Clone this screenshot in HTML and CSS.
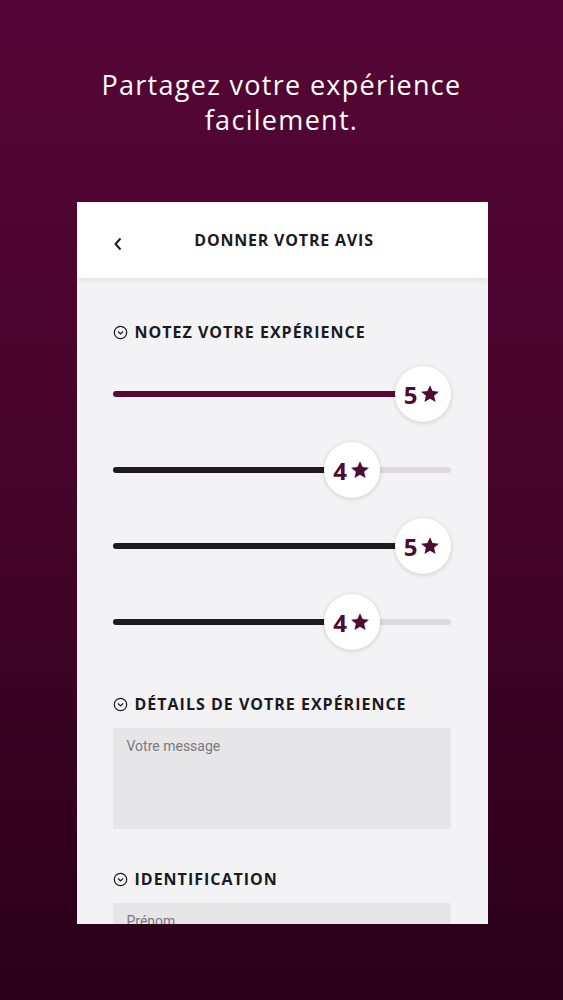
FILE: index.html
```html
<!DOCTYPE html>
<html>
<head>
  <title>Donner votre avis</title>
  <link rel="stylesheet" href="styles.css">
</head>
<body>

  <div class="screen">
    <h1 class="tagline">Partagez votre expérience<br>facilement.</h1>

    <div class="phone">
      <div class="topbar">
        <span class="back">
          <svg width="10" height="14" viewBox="0 0 10 14"><path d="M7.5 1.5 L2.5 7 L7.5 12.5" fill="none" stroke="#1b1a1d" stroke-width="2"/></svg>
        </span>
        <span class="topbar-title">DONNER VOTRE AVIS</span>
      </div>

      <div class="content">
        <!-- Notes -->
        <h2 class="section-title">
          <svg class="chev" width="15" height="15" viewBox="0 0 16 16"><circle cx="8" cy="8" r="6.6" fill="none" stroke="#1b1a1d" stroke-width="1.3"/><path d="M5.3 6.9 L8 9.5 L10.7 6.9" fill="none" stroke="#1b1a1d" stroke-width="1.3"/></svg>
          NOTEZ VOTRE EXPÉRIENCE
        </h2>

        <div class="ratings">
          <div class="slider active" style="--pos: 1">
            <div class="fill"></div>
            <div class="thumb">5<svg class="star" viewBox="0 0 24 24"><path d="M12 1.5l3.1 7 7.6.7-5.8 5 1.8 7.5L12 17.8l-6.7 3.9 1.8-7.5-5.8-5 7.6-.7z"/></svg></div>
          </div>
          <div class="slider" style="--pos: 0.75">
            <div class="fill"></div>
            <div class="thumb">4<svg class="star" viewBox="0 0 24 24"><path d="M12 1.5l3.1 7 7.6.7-5.8 5 1.8 7.5L12 17.8l-6.7 3.9 1.8-7.5-5.8-5 7.6-.7z"/></svg></div>
          </div>
          <div class="slider" style="--pos: 1">
            <div class="fill"></div>
            <div class="thumb">5<svg class="star" viewBox="0 0 24 24"><path d="M12 1.5l3.1 7 7.6.7-5.8 5 1.8 7.5L12 17.8l-6.7 3.9 1.8-7.5-5.8-5 7.6-.7z"/></svg></div>
          </div>
          <div class="slider" style="--pos: 0.75">
            <div class="fill"></div>
            <div class="thumb">4<svg class="star" viewBox="0 0 24 24"><path d="M12 1.5l3.1 7 7.6.7-5.8 5 1.8 7.5L12 17.8l-6.7 3.9 1.8-7.5-5.8-5 7.6-.7z"/></svg></div>
          </div>
        </div>

        <!-- Message -->
        <h2 class="section-title">
          <svg class="chev" width="15" height="15" viewBox="0 0 16 16"><circle cx="8" cy="8" r="6.6" fill="none" stroke="#1b1a1d" stroke-width="1.3"/><path d="M5.3 6.9 L8 9.5 L10.7 6.9" fill="none" stroke="#1b1a1d" stroke-width="1.3"/></svg>
          DÉTAILS DE VOTRE EXPÉRIENCE
        </h2>
        <textarea class="field message" placeholder="Votre message"></textarea>

        <!-- Identification -->
        <h2 class="section-title">
          <svg class="chev" width="15" height="15" viewBox="0 0 16 16"><circle cx="8" cy="8" r="6.6" fill="none" stroke="#1b1a1d" stroke-width="1.3"/><path d="M5.3 6.9 L8 9.5 L10.7 6.9" fill="none" stroke="#1b1a1d" stroke-width="1.3"/></svg>
          IDENTIFICATION
        </h2>
        <input class="field" type="text" placeholder="Prénom">
      </div>
    </div>
  </div>

</body>
</html>
```

FILE: styles.css
```css
* {
  box-sizing: border-box;
}

body, html {
  height: 100%;
  margin: 0;
}

body {
  font-family: "Open Sans", sans-serif;
  background: linear-gradient(180deg, #560636 0%, #420327 55%, #2a0119 100%);
  overflow: hidden;
}

.screen {
  display: flex;
  flex-direction: column;
  align-items: center;
  padding-top: 67px;
}

.tagline {
  margin: 0;
  color: #fff;
  font-size: 27px;
  font-weight: 500;
  line-height: 35px;
  text-align: center;
  letter-spacing: 1.3px;
}

.phone {
  margin-top: 65px;
  width: 411px;
  height: 722px;
  margin-left: 1px;
  background-color: #f3f2f5;
  overflow: hidden;
}

.topbar {
  height: 76px;
  background-color: #fff;
  display: flex;
  align-items: center;
  justify-content: center;
  position: relative;
  box-shadow: 0 2px 6px rgba(0,0,0,0.08);
}

.back {
  position: absolute;
  left: 36px;
  top: 32px;
}

.topbar-title {
  font-size: 16px;
  font-weight: 700;
  color: #1b1a1d;
  letter-spacing: 0.8px;
  margin-left: 4px;
}

.content {
  padding: 44px 37px 0 36px;
}

.section-title {
  display: flex;
  align-items: center;
  gap: 7px;
  margin: 0;
  font-size: 16px;
  font-weight: 700;
  color: #1b1a1d;
  letter-spacing: 1px;
  height: 20px;
}

.ratings {
  padding: 14px 0 34px;
}

.slider {
  position: relative;
  height: 76px;
  display: flex;
  align-items: center;
}

.slider::before {
  content: "";
  position: absolute;
  left: 0;
  right: 0;
  height: 6px;
  border-radius: 3px;
  background-color: #dcdadd;
}

.fill {
  position: relative;
  height: 6px;
  border-radius: 3px;
  background-color: #1e1b20;
  width: calc((100% - 56px) * var(--pos) + 28px);
}

.slider.active .fill {
  background-color: #580a36;
}

.thumb {
  position: absolute;
  left: calc((100% - 56px) * var(--pos));
  top: 10px;
  width: 56px;
  height: 56px;
  border-radius: 50%;
  background-color: #fff;
  box-shadow: 0 1px 5px rgba(0,0,0,0.16);
  display: flex;
  align-items: center;
  justify-content: center;
  gap: 3px;
  color: #4f0a30;
  font-size: 24px;
  font-weight: 700;
  padding-right: 1px;
}

.star {
  width: 20px;
  height: 20px;
  fill: #4f0a30;
}

.field {
  display: block;
  width: 100%;
  border: none;
  border-radius: 2px;
  background-color: #e6e5e8;
  font-family: Roboto, sans-serif;
  font-size: 14px;
  color: #333;
  padding: 10px 14px;
  margin: 14px 0 0;
  resize: none;
  outline: none;
}

.field::placeholder {
  color: #7b797e;
}

.message {
  height: 101px;
  margin-bottom: 40px;
}
```
